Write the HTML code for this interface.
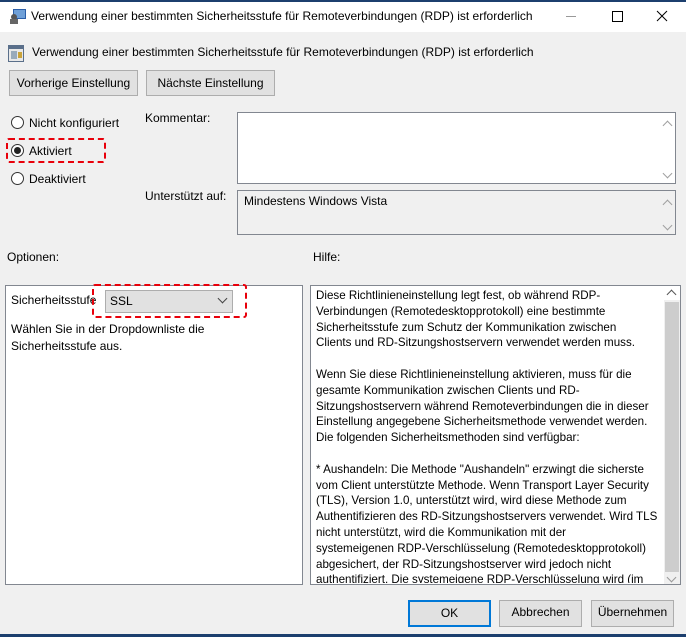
<!DOCTYPE html>
<html><head><meta charset="utf-8"><style>
*{box-sizing:border-box;margin:0;padding:0}
body{width:686px;height:637px;background:#f0f0f0;font-family:"Liberation Sans",sans-serif;font-size:12px;color:#000;position:relative;overflow:hidden}
.a{position:absolute;white-space:nowrap}
.btn{position:absolute;background:#e1e1e1;border:1px solid #adadad;text-align:center;line-height:23px}
.rad{position:absolute;width:13px;height:13px;border:1px solid #333;border-radius:50%;background:#fff}
.box{position:absolute;border:1px solid #828790;background:#fff}
.red{position:absolute;border:2px dashed #e8000b;border-radius:3px}
.chev{position:absolute;width:7px;height:7px;border-right:1px solid #a0a0a0;border-bottom:1px solid #a0a0a0}
</style></head><body>
<div class="a" style="left:0;top:0;width:686px;height:2px;background:#1c3f6e"></div>
<div class="a" style="left:0;top:2px;width:686px;height:30px;background:#fff"></div>
<svg class="a" style="left:9px;top:8px" width="18" height="16"><rect x="4" y="1" width="13" height="10" fill="#2b5ea8"/><rect x="5" y="2" width="11" height="8" fill="#6fa0d8"/><circle cx="5" cy="9" r="3" fill="#555"/><rect x="1" y="11" width="8" height="5" fill="#666"/></svg>
<div class="a" style="left:31px;top:9px">Verwendung einer bestimmten Sicherheitsstufe für Remoteverbindungen (RDP) ist erforderlich</div>
<div class="a" style="left:566px;top:16px;width:10px;height:1px;background:#999"></div>
<div class="a" style="left:612px;top:11px;width:11px;height:11px;border:1px solid #000"></div>
<svg class="a" style="left:656px;top:10px" width="12" height="12"><path d="M1 1L11 11M11 1L1 11" stroke="#000" stroke-width="1"/></svg>
<svg class="a" style="left:8px;top:45px" width="16" height="17"><rect x="0" y="0" width="16" height="17" fill="#5a6f8a"/><rect x="1" y="4" width="14" height="12" fill="#e8e8e8"/><rect x="3" y="6" width="6" height="8" fill="#9ab"/><rect x="10" y="7" width="4" height="6" fill="#c9a33a"/></svg>
<div class="a" style="left:32px;top:45px">Verwendung einer bestimmten Sicherheitsstufe für Remoteverbindungen (RDP) ist erforderlich</div>
<div class="btn" style="left:9px;top:70px;width:129px;height:26px;line-height:24px">Vorherige Einstellung</div>
<div class="btn" style="left:146px;top:70px;width:129px;height:26px;line-height:24px">Nächste Einstellung</div>
<div class="rad" style="left:11px;top:116px"></div>
<div class="a" style="left:29px;top:116px">Nicht konfiguriert</div>
<div class="rad" style="left:11px;top:144px"></div>
<div class="a" style="left:14px;top:147px;width:7px;height:7px;border-radius:50%;background:#222"></div>
<div class="a" style="left:29px;top:144px">Aktiviert</div>
<div class="red" style="left:6px;top:138px;width:100px;height:25px"></div>
<div class="rad" style="left:11px;top:172px"></div>
<div class="a" style="left:29px;top:172px">Deaktiviert</div>
<div class="a" style="left:145px;top:111px">Kommentar:</div>
<div class="box" style="left:237px;top:112px;width:439px;height:72px"></div>
<div class="chev" style="left:664px;top:122px;transform:rotate(-135deg)"></div>
<div class="chev" style="left:664px;top:170px;transform:rotate(45deg)"></div>
<div class="a" style="left:145px;top:189px">Unterstützt auf:</div>
<div class="box" style="left:237px;top:190px;width:439px;height:45px;background:#f0f0f0"></div>
<div class="a" style="left:244px;top:194px">Mindestens Windows Vista</div>
<div class="chev" style="left:664px;top:201px;transform:rotate(-135deg)"></div>
<div class="chev" style="left:664px;top:222px;transform:rotate(45deg)"></div>
<div class="a" style="left:7px;top:250px">Optionen:</div>
<div class="a" style="left:313px;top:250px">Hilfe:</div>
<div class="box" style="left:5px;top:285px;width:298px;height:300px;border-color:#828790"></div>
<div class="a" style="left:11px;top:293px">Sicherheitsstufe</div>
<div class="a" style="left:105px;top:290px;width:128px;height:23px;background:#e1e1e1;border:1px solid #adadad"></div>
<div class="a" style="left:110px;top:294px">SSL</div>
<div class="chev" style="left:219px;top:295px;transform:rotate(45deg);border-color:#444"></div>
<div class="red" style="left:92px;top:284px;width:155px;height:34px"></div>
<div class="a" style="left:11px;top:321px;line-height:17px">Wählen Sie in der Dropdownliste die<br>Sicherheitsstufe aus.</div>
<div class="box" style="left:310px;top:285px;width:371px;height:300px"></div>
<div class="a" style="left:664px;top:300px;width:16px;height:284px;background:#f0f0f0"></div>
<div class="a" style="left:665px;top:302px;width:14px;height:270px;background:#cdcdcd"></div>
<div class="chev" style="left:668px;top:291px;transform:rotate(-135deg);border-color:#555"></div>
<div class="a" style="left:316px;top:288px;width:346px;height:295px;overflow:hidden;line-height:15.8px;font-size:11.6px">Diese Richtlinieneinstellung legt fest, ob während RDP-<br>Verbindungen (Remotedesktopprotokoll) eine bestimmte<br>Sicherheitsstufe zum Schutz der Kommunikation zwischen<br>Clients und RD-Sitzungshostservern verwendet werden muss.<br><br>Wenn Sie diese Richtlinieneinstellung aktivieren, muss für die<br>gesamte Kommunikation zwischen Clients und RD-<br>Sitzungshostservern während Remoteverbindungen die in dieser<br>Einstellung angegebene Sicherheitsmethode verwendet werden.<br>Die folgenden Sicherheitsmethoden sind verfügbar:<br><br>* Aushandeln: Die Methode "Aushandeln" erzwingt die sicherste<br>vom Client unterstützte Methode. Wenn Transport Layer Security<br>(TLS), Version 1.0, unterstützt wird, wird diese Methode zum<br>Authentifizieren des RD-Sitzungshostservers verwendet. Wird TLS<br>nicht unterstützt, wird die Kommunikation mit der<br>systemeigenen RDP-Verschlüsselung (Remotedesktopprotokoll)<br>abgesichert, der RD-Sitzungshostserver wird jedoch nicht<br>authentifiziert. Die systemeigene RDP-Verschlüsselung wird (im<br>Unterschied zur SSL-Verschlüsselung) nicht empfohlen.</div>
<div class="chev" style="left:668px;top:574px;transform:rotate(45deg);border-color:#999"></div>
<div class="btn" style="left:408px;top:600px;width:83px;height:27px;border:2px solid #0078d7;line-height:23px">OK</div>
<div class="btn" style="left:499px;top:600px;width:83px;height:27px">Abbrechen</div>
<div class="btn" style="left:591px;top:600px;width:83px;height:27px">Übernehmen</div>
<div class="a" style="left:0;top:634px;width:686px;height:3px;background:#1c3f6e"></div>
</body></html>
